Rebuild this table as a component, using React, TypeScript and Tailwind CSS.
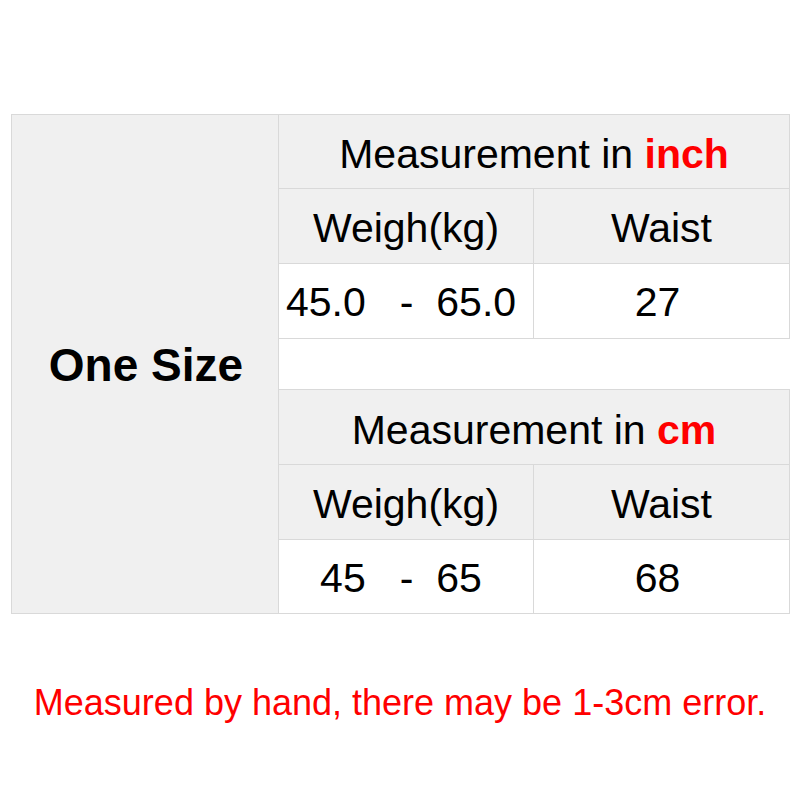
export default function App() {
  const font = { fontFamily: '"Liberation Sans", Arial, sans-serif' };
  return (
    <div className="w-[800px] h-[800px] bg-white text-black" style={font}>
      <div className="pt-[114px] pl-[11px]">
        <div className="grid grid-cols-[268px_255px_256px] grid-rows-[75px_75px_75px_50px_76px_75px_74px] w-[779px]">
          {/* left label */}
          <div className="row-span-7 bg-[#f0f0f0] border border-[#d9d9d9] flex items-center justify-center">
            <span className="text-[46px] font-bold pl-[2px] pt-[3px]">One Size</span>
          </div>

          {/* inch block */}
          <div className="col-span-2 bg-[#f0f0f0] border-t border-r border-b border-[#d9d9d9] flex items-center justify-center text-[41px] leading-none pt-[6px]">
            Measurement in&nbsp;<span className="font-bold text-[#ff0000]">inch</span>
          </div>
          <div className="bg-[#f0f0f0] border-r border-b border-[#d9d9d9] flex items-center justify-center text-[41px] pt-[6px]">
            Weigh(kg)
          </div>
          <div className="bg-[#f0f0f0] border-r border-b border-[#d9d9d9] flex items-center justify-center text-[41px] pt-[6px]">
            Waist
          </div>
          <div className="bg-white border-r border-b border-[#d9d9d9] flex items-center justify-center text-[41px] whitespace-pre pr-[10px] pt-[4px]">
            45.0   -  65.0
          </div>
          <div className="bg-white border-r border-b border-[#d9d9d9] flex items-center justify-center text-[41px] pr-[8px] pt-[4px]">
            27
          </div>

          {/* gap */}
          <div className="col-span-2 bg-white" />

          {/* cm block */}
          <div className="col-span-2 bg-[#f0f0f0] border-t border-r border-b border-[#d9d9d9] flex items-center justify-center text-[41px] leading-none pt-[6px]">
            Measurement in&nbsp;<span className="font-bold text-[#ff0000]">cm</span>
          </div>
          <div className="bg-[#f0f0f0] border-r border-b border-[#d9d9d9] flex items-center justify-center text-[41px] pt-[6px]">
            Weigh(kg)
          </div>
          <div className="bg-[#f0f0f0] border-r border-b border-[#d9d9d9] flex items-center justify-center text-[41px] pt-[6px]">
            Waist
          </div>
          <div className="bg-white border-r border-b border-[#d9d9d9] flex items-center justify-center text-[41px] whitespace-pre pr-[10px] pt-[4px]">
            45   -  65
          </div>
          <div className="bg-white border-r border-b border-[#d9d9d9] flex items-center justify-center text-[41px] pr-[8px] pt-[4px]">
            68
          </div>
        </div>
      </div>

      <p className="mt-[62px] text-center text-[36px] text-[#ff0000]">
        Measured by hand, there may be 1-3cm error.
      </p>
    </div>
  );
}
